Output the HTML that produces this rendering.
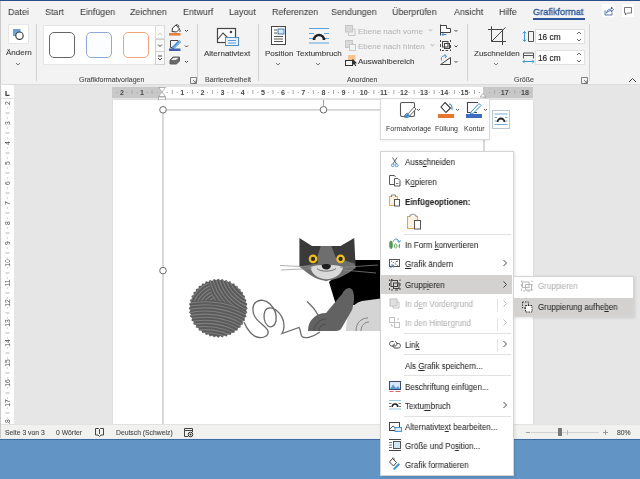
<!DOCTYPE html>
<html><head><meta charset="utf-8">
<style>
*{margin:0;padding:0;box-sizing:border-box}
html,body{width:640px;height:479px;overflow:hidden;background:#e6e6e6;font-family:"Liberation Sans",sans-serif;color:#333}
.a{position:absolute;white-space:nowrap}
body>div{will-change:transform}
.tab{position:absolute;top:6.5px;font-size:9.6px;color:#3c3c3c;line-height:10px;-webkit-text-stroke:0.05px #3c3c3c;transform:scaleX(0.93);transform-origin:0 0}
.rb{position:absolute;font-size:8px;color:#3a3a3a;line-height:9px;-webkit-text-stroke:0.1px #3a3a3a}
.gl{position:absolute;top:75.5px;font-size:7px;color:#4a4a4a;line-height:8px;-webkit-text-stroke:0.1px #4a4a4a}
.sep{position:absolute;top:24px;width:1px;height:57px;background:#d3d2d1}
.mi{position:absolute;left:405px;font-size:8.5px;color:#262626;line-height:9px;transform:scaleX(0.935);transform-origin:0 0;-webkit-text-stroke:0.05px #262626}
.mi.dis,.rb.dis{color:#b0b0b0;-webkit-text-stroke:0.05px #b0b0b0}
.ms{position:absolute;left:404px;width:107px;height:1px;background:#e2e2e2}
.chev{position:absolute;width:4px;height:4px;border-right:1px solid #555;border-bottom:1px solid #555;transform:rotate(45deg)}
</style></head><body>
<!-- ribbon background -->
<div class="a" style="left:0;top:0;width:640px;height:85px;background:#f3f3f3"></div>
<div class="a" style="left:0;top:0;width:640px;height:1px;background:#2b4f8a"></div>
<div class="a" style="left:0;top:1px;width:1px;height:84px;background:#c9c9c9"></div>
<div class="a" style="left:0;top:84px;width:640px;height:1px;background:#dcdcdc"></div>

<!-- tabs -->
<div class="tab" style="left:8px">Datei</div>
<div class="tab" style="left:45px">Start</div>
<div class="tab" style="left:80px">Einfügen</div>
<div class="tab" style="left:130px">Zeichnen</div>
<div class="tab" style="left:183px">Entwurf</div>
<div class="tab" style="left:229px">Layout</div>
<div class="tab" style="left:272px">Referenzen</div>
<div class="tab" style="left:331px">Sendungen</div>
<div class="tab" style="left:392px">Überprüfen</div>
<div class="tab" style="left:454px">Ansicht</div>
<div class="tab" style="left:499px">Hilfe</div>
<div class="tab" style="left:533px;color:#2b579a;font-size:9.9px;-webkit-text-stroke:0.35px #2b579a">Grafikformat</div>
<div class="a" style="left:533px;top:18px;width:52px;height:2px;background:#2b579a"></div>
<div class="a" style="left:602px;top:4px;width:13px;height:13px;background:#fff"></div>
<div class="a" style="left:622px;top:4px;width:12px;height:13px;background:#fff"></div>
<svg class="a" style="left:602px;top:4px" width="13" height="13" viewBox="0 0 13 13"><path d="M3 6.5 V11 H10 V8.5" fill="none" stroke="#2b579a" stroke-width="0.8"/><path d="M4.5 9 C5 6 7 5 9.5 5 V3 L11.5 5.5 L9.5 8 V6.5 C7.5 6.5 6 7.5 4.5 9 Z" fill="none" stroke="#2b579a" stroke-width="0.8"/></svg>
<svg class="a" style="left:622px;top:4px" width="12" height="13" viewBox="0 0 12 13"><path d="M2.5 3.5 H9.5 V9 H5.5 L3.5 11 V9 H2.5 Z" fill="none" stroke="#555" stroke-width="0.8"/></svg>


<!-- RIBBON GROUPS -->
<!-- group 1: Ändern -->
<div class="a" style="left:8px;top:24px;width:21px;height:20px;background:#fff;border:1px solid #e6e6e6"></div>
<svg class="a" style="left:8px;top:24px" width="21" height="20" viewBox="0 0 21 20">
<rect x="5" y="5" width="7.5" height="7" fill="#6a9fd8"/>
<circle cx="11.5" cy="11.7" r="3.7" fill="#fff" stroke="#333" stroke-width="1.1"/>
</svg>
<div class="rb" style="left:6px;top:48px">Ändern</div>
<svg class="a" style="left:14px;top:60.5px" width="8" height="6" viewBox="0 0 8 6"><path d="M2 2 L4 4 L6 2" fill="none" stroke="#666" stroke-width="0.9"/></svg>
<div class="sep" style="left:36px"></div>

<!-- group 2: Grafikformatvorlagen -->
<div class="a" style="left:43px;top:25px;width:113px;height:40px;background:#fff;border:1px solid #e6e6e6"></div>
<div class="a" style="left:49px;top:32px;width:26px;height:26px;border:1.5px solid #666;border-radius:5px"></div>
<div class="a" style="left:86px;top:32px;width:26px;height:26px;border:1.2px solid #8ea8da;border-radius:5px;background:#fbfdff"></div>
<div class="a" style="left:123px;top:32px;width:26px;height:26px;border:1.2px solid #f0a27a;border-radius:5px"></div>
<div class="a" style="left:155px;top:25px;width:10px;height:14px;background:#fafafa;border:1px solid #dcdcdc"></div>
<div class="a" style="left:155px;top:39px;width:10px;height:13px;background:#fafafa;border:1px solid #d0d0d0"></div>
<div class="a" style="left:155px;top:51px;width:10px;height:14px;background:#fafafa;border:1px solid #d0d0d0"></div>
<svg class="a" style="left:155px;top:25px" width="10" height="40" viewBox="0 0 10 40">
<path d="M3 10 L5 8 L7 10" fill="none" stroke="#c8c8c8" stroke-width="1"/>
<path d="M3 19.5 L5 21.5 L7 19.5" fill="none" stroke="#444" stroke-width="1"/>
<path d="M3 31 L7 31 M3 33 L5 35 L7 33" fill="none" stroke="#444" stroke-width="1"/>
</svg>
<svg class="a" style="left:167px;top:24px" width="26" height="42" viewBox="0 0 26 42">
<path d="M5.5 4 L9 1 L12.5 5 L9.5 8 L5 7.5 Z" fill="#fff" stroke="#333" stroke-width="1"/>
<path d="M9 1 C10 0 12 1 12 3 M12 5 C13.5 5.5 13.5 7.5 12.5 8" fill="none" stroke="#333" stroke-width="0.9"/>
<rect x="2" y="9" width="11.5" height="2.6" fill="#e8803c"/>
<path d="M18 6 L19.5 7.5 L21 6" fill="none" stroke="#444" stroke-width="1"/>
<path d="M11 16.5 H3.5 V23.5 H5" fill="none" stroke="#444" stroke-width="1"/>
<path d="M5.5 23 L12 16.5 L13.5 18 L7 24.5 L5 25 Z" fill="#fff" stroke="#2f79c8" stroke-width="1"/>
<path d="M6 23.5 L12 17.5" stroke="#3a8fd6" stroke-width="1.2"/>
<rect x="2" y="24.5" width="11.5" height="2.5" fill="#3f62ae"/>
<path d="M18 21.5 L19.5 23 L21 21.5" fill="none" stroke="#444" stroke-width="1"/>
<path d="M3 36 L6 33 H12.5 V37 L9.5 40 H3 Z" fill="#6a6a6a" stroke="#555" stroke-width="0.9"/>
<path d="M4 36 L6.5 33.8 H11.5 L9 36 Z" fill="#e8e8e8"/>
<path d="M18 37 L19.5 38.5 L21 37" fill="none" stroke="#444" stroke-width="1"/>
</svg>
<div class="gl" style="left:79px">Grafikformatvorlagen</div>
<svg class="a" style="left:190px;top:77px" width="7" height="7" viewBox="0 0 7 7"><path d="M0.5 0.5 H6.5 V6.5 H0.5Z M3 3 L6 6 M6 3.5 V6 H3.5" fill="none" stroke="#666" stroke-width="0.8"/></svg>
<div class="sep" style="left:197px"></div>

<!-- group 3: Barrierefreiheit -->
<svg class="a" style="left:216px;top:27px" width="24" height="20" viewBox="0 0 24 20">
<rect x="1.5" y="1.5" width="18" height="14" fill="#fff" stroke="#444" stroke-width="1.2"/>
<path d="M2 12 L7 6 L12 11" fill="none" stroke="#444" stroke-width="1.1"/>
<circle cx="15" cy="5" r="1.3" fill="#444"/>
<rect x="9.5" y="10.5" width="13" height="8" fill="#eaf3fb" stroke="#4a90d0" stroke-width="1"/>
<path d="M12 13.5 H20 M12 16 H20" stroke="#4a90d0" stroke-width="0.9"/>
</svg>
<div class="rb" style="left:204px;top:49px">Alternativtext</div>
<div class="gl" style="left:205px">Barrierefreiheit</div>
<div class="sep" style="left:258px"></div>

<!-- group 4: Anordnen -->
<svg class="a" style="left:270px;top:25px" width="18" height="21" viewBox="0 0 18 21">
<rect x="1.5" y="1.5" width="14" height="18" fill="#fff" stroke="#444" stroke-width="1"/>
<rect x="8" y="4" width="6" height="5" fill="#dbe9f6" stroke="#2f6fb5" stroke-width="0.9"/>
<path d="M4 5 H7 M4 8 H7 M4 11.5 H13 M4 14 H13 M4 16.5 H13" stroke="#444" stroke-width="0.9"/>
</svg>
<div class="rb" style="left:265px;top:49px">Position</div>
<svg class="a" style="left:274px;top:60.5px" width="8" height="6" viewBox="0 0 8 6"><path d="M2 2 L4 4 L6 2" fill="none" stroke="#666" stroke-width="0.9"/></svg>
<svg class="a" style="left:308px;top:27px" width="22" height="18" viewBox="0 0 22 18">
<path d="M1 1.5 H21 M1 6.5 H6 M16 6.5 H21 M1 11.5 H5 M17 11.5 H21 M1 16 H21" stroke="#62a3d8" stroke-width="1.2"/>
<path d="M6 13 A5 5 0 0 1 16 13" fill="none" stroke="#222" stroke-width="2.6"/>
</svg>
<div class="rb" style="left:296px;top:49px">Textumbruch</div>
<svg class="a" style="left:314px;top:60.5px" width="8" height="6" viewBox="0 0 8 6"><path d="M2 2 L4 4 L6 2" fill="none" stroke="#666" stroke-width="0.9"/></svg>

<svg class="a" style="left:344px;top:25px" width="14" height="42" viewBox="0 0 14 42">
<rect x="1.5" y="0.5" width="7" height="6.5" fill="#d9d9d9" stroke="#c6c6c6" stroke-width="1"/>
<path d="M8.5 4 H11 V10.5 H4.5 V7.5" fill="none" stroke="#c6c6c6" stroke-width="1"/>
<rect x="1.5" y="15.5" width="7" height="7" fill="#d9d9d9" stroke="#c6c6c6" stroke-width="1"/>
<rect x="5.5" y="19.5" width="6" height="6" fill="#f3f3f3" stroke="#c6c6c6" stroke-width="1"/>
<rect x="4" y="30" width="7.5" height="5" fill="#f7c38f"/>
<rect x="1.5" y="35.5" width="7" height="5" fill="none" stroke="#333" stroke-width="1"/>
<path d="M8.5 33.5 V40.5 L10 39 L11.3 41.3 L12.3 40.8 L11.1 38.5 L13 38.3 Z" fill="#333"/>
</svg>
<div class="rb dis" style="left:358px;top:27px;color:#b4b4b4">Ebene nach vorne</div>
<div class="chev" style="left:429px;top:28px;width:3px;height:3px;border-color:#c0c0c0"></div>
<div class="rb dis" style="left:358px;top:42px;color:#b4b4b4">Ebene nach hinten</div>
<div class="chev" style="left:431px;top:43px;width:3px;height:3px;border-color:#c0c0c0"></div>
<div class="rb" style="left:358px;top:57px">Auswahlbereich</div>

<svg class="a" style="left:439px;top:24px" width="22" height="42" viewBox="0 0 22 42">
<path d="M1.5 0.5 V11.5" stroke="#444" stroke-width="1"/>
<path d="M2 1.5 H7.5 V4.5 H11.5 V8.5 H2" fill="#fff" stroke="#444" stroke-width="1"/>
<path d="M7.5 10.5 H3 M4.5 9 L3 10.5 L4.5 12" fill="none" stroke="#3a8fd6" stroke-width="1"/>
<path d="M15.5 6 L17 7.5 L18.5 6" fill="none" stroke="#444" stroke-width="1"/>
<path d="M1.5 16 V18 M1.5 20 V23 M1.5 25 V27 M11.5 16 V18 M11.5 21 V24 M11.5 25.5 V27 M3 26.5 H5 M6.5 26.5 H9" fill="none" stroke="#444" stroke-width="1"/>
<rect x="3.5" y="17.5" width="5.5" height="5.5" fill="none" stroke="#444" stroke-width="1"/>
<rect x="5.5" y="19.5" width="5" height="5" fill="none" stroke="#444" stroke-width="1"/>
<path d="M15.5 21.5 L17 23 L18.5 21.5" fill="none" stroke="#444" stroke-width="1"/>
<path d="M1.5 40.5 L11.5 33.5 V40.5 Z" fill="none" stroke="#444" stroke-width="1"/>
<path d="M2.5 36.5 C1.5 33 4 31 7 32 M5.5 30.5 L7.5 32 L6 34" fill="none" stroke="#3a8fd6" stroke-width="1"/>
<path d="M15.5 37 L17 38.5 L18.5 37" fill="none" stroke="#444" stroke-width="1"/>
</svg>
<div class="gl" style="left:347px">Anordnen</div>
<div class="sep" style="left:467px"></div>

<!-- group 5: Größe -->
<svg class="a" style="left:484px;top:22px" width="24" height="25" viewBox="0 0 24 25">
<path d="M4 7.5 H18.5 V23 M7.5 4.3 V19.5 H22 M7.5 19.5 L21.6 5.3" fill="none" stroke="#444" stroke-width="1"/>
</svg>
<div class="rb" style="left:474px;top:49px">Zuschneiden</div>
<svg class="a" style="left:492px;top:60.5px" width="8" height="6" viewBox="0 0 8 6"><path d="M2 2 L4 4 L6 2" fill="none" stroke="#666" stroke-width="0.9"/></svg>
<svg class="a" style="left:521px;top:30px" width="14" height="35" viewBox="0 0 14 35">
<path d="M3.5 1.5 V11.5 M1.8 3.3 L3.5 1.5 L5.2 3.3 M1.8 9.7 L3.5 11.5 L5.2 9.7" fill="none" stroke="#3a9ad0" stroke-width="1"/>
<path d="M7.5 1.5 H12.5 V11.5 H7.5 Z" fill="none" stroke="#555" stroke-width="1"/>
<path d="M2.5 28.5 V23 H12.5 V28.5 M2.5 25.5 H12.5" fill="none" stroke="#555" stroke-width="1"/>
<path d="M2 31.5 H13 M3.7 29.8 L2 31.5 L3.7 33.2 M11.3 29.8 L13 31.5 L11.3 33.2" fill="none" stroke="#3a9ad0" stroke-width="1"/>
</svg>
<div class="a" style="left:535px;top:29px;width:50px;height:15px;background:#fff;border:1px solid #e0e0e0"></div>
<div class="rb" style="left:538px;top:33px;font-size:8.3px;color:#222;-webkit-text-stroke:0.15px #222">16 cm</div>
<div class="a" style="left:535px;top:50px;width:50px;height:15px;background:#fff;border:1px solid #e0e0e0"></div>
<div class="rb" style="left:538px;top:54px;font-size:8.3px;color:#222;-webkit-text-stroke:0.15px #222">16 cm</div>
<svg class="a" style="left:576px;top:30px" width="6" height="35" viewBox="0 0 6 35">
<path d="M1 4 L3 2 L5 4 M1 9 L3 11 L5 9 M1 25 L3 23 L5 25 M1 30 L3 32 L5 30" fill="none" stroke="#555" stroke-width="0.9"/>
</svg>
<div class="gl" style="left:514px">Größe</div>
<svg class="a" style="left:581px;top:77px" width="7" height="7" viewBox="0 0 7 7"><path d="M0.5 0.5 H6.5 V6.5 H0.5Z M3 3 L6 6 M6 3.5 V6 H3.5" fill="none" stroke="#666" stroke-width="0.8"/></svg>
<div class="sep" style="left:589px"></div>
<svg class="a" style="left:628px;top:77px" width="9" height="6" viewBox="0 0 9 6"><path d="M1 5 L4.5 1.5 L8 5" fill="none" stroke="#444" stroke-width="1"/></svg>

<!-- body area -->
<div class="a" style="left:112px;top:87px;width:421px;height:11px;background:#fff"></div>
<div class="a" style="left:112px;top:87px;width:49px;height:11px;background:#c8c8c8"></div>
<div class="a" style="left:483px;top:87px;width:50px;height:11px;background:#c8c8c8"></div>
<svg class="a" style="left:0;top:0" width="640" height="110" viewBox="0 0 640 110">
<rect x="116.4" y="92" width="1" height="1" fill="#a0a0a0"/>
<text x="121.9" y="95" font-size="7.2" font-weight="bold" text-anchor="middle" fill="#4a4a4a" font-family="Liberation Sans">2</text>
<rect x="126.4" y="92" width="1" height="1" fill="#a0a0a0"/>
<rect x="131.5" y="90" width="1" height="4" fill="#a8a8a8"/>
<rect x="136.5" y="92" width="1" height="1" fill="#a0a0a0"/>
<text x="142.0" y="95" font-size="7.2" font-weight="bold" text-anchor="middle" fill="#4a4a4a" font-family="Liberation Sans">1</text>
<rect x="146.6" y="92" width="1" height="1" fill="#a0a0a0"/>
<rect x="151.6" y="90" width="1" height="4" fill="#a8a8a8"/>
<rect x="156.7" y="92" width="1" height="1" fill="#a0a0a0"/>
<rect x="166.7" y="92" width="1" height="1" fill="#a0a0a0"/>
<rect x="171.8" y="90" width="1" height="4" fill="#a8a8a8"/>
<rect x="176.8" y="92" width="1" height="1" fill="#a0a0a0"/>
<text x="182.3" y="95" font-size="7.2" font-weight="bold" text-anchor="middle" fill="#4a4a4a" font-family="Liberation Sans">1</text>
<rect x="186.9" y="92" width="1" height="1" fill="#a0a0a0"/>
<rect x="191.9" y="90" width="1" height="4" fill="#a8a8a8"/>
<rect x="197.0" y="92" width="1" height="1" fill="#a0a0a0"/>
<text x="202.5" y="95" font-size="7.2" font-weight="bold" text-anchor="middle" fill="#4a4a4a" font-family="Liberation Sans">2</text>
<rect x="207.0" y="92" width="1" height="1" fill="#a0a0a0"/>
<rect x="212.1" y="90" width="1" height="4" fill="#a8a8a8"/>
<rect x="217.1" y="92" width="1" height="1" fill="#a0a0a0"/>
<text x="222.6" y="95" font-size="7.2" font-weight="bold" text-anchor="middle" fill="#4a4a4a" font-family="Liberation Sans">3</text>
<rect x="227.2" y="92" width="1" height="1" fill="#a0a0a0"/>
<rect x="232.2" y="90" width="1" height="4" fill="#a8a8a8"/>
<rect x="237.3" y="92" width="1" height="1" fill="#a0a0a0"/>
<text x="242.8" y="95" font-size="7.2" font-weight="bold" text-anchor="middle" fill="#4a4a4a" font-family="Liberation Sans">4</text>
<rect x="247.3" y="92" width="1" height="1" fill="#a0a0a0"/>
<rect x="252.4" y="90" width="1" height="4" fill="#a8a8a8"/>
<rect x="257.4" y="92" width="1" height="1" fill="#a0a0a0"/>
<text x="262.9" y="95" font-size="7.2" font-weight="bold" text-anchor="middle" fill="#4a4a4a" font-family="Liberation Sans">5</text>
<rect x="267.5" y="92" width="1" height="1" fill="#a0a0a0"/>
<rect x="272.5" y="90" width="1" height="4" fill="#a8a8a8"/>
<rect x="277.6" y="92" width="1" height="1" fill="#a0a0a0"/>
<text x="283.1" y="95" font-size="7.2" font-weight="bold" text-anchor="middle" fill="#4a4a4a" font-family="Liberation Sans">6</text>
<rect x="287.6" y="92" width="1" height="1" fill="#a0a0a0"/>
<rect x="292.7" y="90" width="1" height="4" fill="#a8a8a8"/>
<rect x="297.7" y="92" width="1" height="1" fill="#a0a0a0"/>
<text x="303.2" y="95" font-size="7.2" font-weight="bold" text-anchor="middle" fill="#4a4a4a" font-family="Liberation Sans">7</text>
<rect x="307.8" y="92" width="1" height="1" fill="#a0a0a0"/>
<rect x="312.8" y="90" width="1" height="4" fill="#a8a8a8"/>
<rect x="317.9" y="92" width="1" height="1" fill="#a0a0a0"/>
<text x="323.4" y="95" font-size="7.2" font-weight="bold" text-anchor="middle" fill="#4a4a4a" font-family="Liberation Sans">8</text>
<rect x="327.9" y="92" width="1" height="1" fill="#a0a0a0"/>
<rect x="333.0" y="90" width="1" height="4" fill="#a8a8a8"/>
<rect x="338.0" y="92" width="1" height="1" fill="#a0a0a0"/>
<text x="343.5" y="95" font-size="7.2" font-weight="bold" text-anchor="middle" fill="#4a4a4a" font-family="Liberation Sans">9</text>
<rect x="348.1" y="92" width="1" height="1" fill="#a0a0a0"/>
<rect x="353.1" y="90" width="1" height="4" fill="#a8a8a8"/>
<rect x="358.2" y="92" width="1" height="1" fill="#a0a0a0"/>
<text x="363.7" y="95" font-size="7.2" font-weight="bold" text-anchor="middle" fill="#4a4a4a" font-family="Liberation Sans">10</text>
<rect x="368.2" y="92" width="1" height="1" fill="#a0a0a0"/>
<rect x="373.3" y="90" width="1" height="4" fill="#a8a8a8"/>
<rect x="378.3" y="92" width="1" height="1" fill="#a0a0a0"/>
<text x="383.8" y="95" font-size="7.2" font-weight="bold" text-anchor="middle" fill="#4a4a4a" font-family="Liberation Sans">11</text>
<rect x="388.4" y="92" width="1" height="1" fill="#a0a0a0"/>
<rect x="393.4" y="90" width="1" height="4" fill="#a8a8a8"/>
<rect x="398.5" y="92" width="1" height="1" fill="#a0a0a0"/>
<text x="404.0" y="95" font-size="7.2" font-weight="bold" text-anchor="middle" fill="#4a4a4a" font-family="Liberation Sans">12</text>
<rect x="408.5" y="92" width="1" height="1" fill="#a0a0a0"/>
<rect x="413.6" y="90" width="1" height="4" fill="#a8a8a8"/>
<rect x="418.6" y="92" width="1" height="1" fill="#a0a0a0"/>
<text x="424.1" y="95" font-size="7.2" font-weight="bold" text-anchor="middle" fill="#4a4a4a" font-family="Liberation Sans">13</text>
<rect x="428.7" y="92" width="1" height="1" fill="#a0a0a0"/>
<rect x="433.7" y="90" width="1" height="4" fill="#a8a8a8"/>
<rect x="438.8" y="92" width="1" height="1" fill="#a0a0a0"/>
<text x="444.3" y="95" font-size="7.2" font-weight="bold" text-anchor="middle" fill="#4a4a4a" font-family="Liberation Sans">14</text>
<rect x="448.8" y="92" width="1" height="1" fill="#a0a0a0"/>
<rect x="453.9" y="90" width="1" height="4" fill="#a8a8a8"/>
<rect x="458.9" y="92" width="1" height="1" fill="#a0a0a0"/>
<text x="464.4" y="95" font-size="7.2" font-weight="bold" text-anchor="middle" fill="#4a4a4a" font-family="Liberation Sans">15</text>
<rect x="469.0" y="92" width="1" height="1" fill="#a0a0a0"/>
<rect x="474.0" y="90" width="1" height="4" fill="#a8a8a8"/>
<rect x="479.1" y="92" width="1" height="1" fill="#a0a0a0"/>
<rect x="489.1" y="92" width="1" height="1" fill="#a0a0a0"/>
<rect x="494.2" y="90" width="1" height="4" fill="#a8a8a8"/>
<rect x="499.2" y="92" width="1" height="1" fill="#a0a0a0"/>
<text x="504.7" y="95" font-size="7.2" font-weight="bold" text-anchor="middle" fill="#4a4a4a" font-family="Liberation Sans">17</text>
<rect x="509.3" y="92" width="1" height="1" fill="#a0a0a0"/>
<rect x="514.3" y="90" width="1" height="4" fill="#a8a8a8"/>
<rect x="519.4" y="92" width="1" height="1" fill="#a0a0a0"/>
<text x="524.9" y="95" font-size="7.2" font-weight="bold" text-anchor="middle" fill="#4a4a4a" font-family="Liberation Sans">18</text>
<rect x="529.4" y="92" width="1" height="1" fill="#a0a0a0"/>
<path d="M158.5 87.5 L165.5 87.5 L162 92 Z M162 92 L158.5 96.5 L165.5 96.5 Z" fill="#fff" stroke="#a0a0a0" stroke-width="0.8"/>
<rect x="158.5" y="97" width="7" height="3" fill="#fff" stroke="#a0a0a0" stroke-width="0.8"/>
<path d="M480 97 L483 93.5 L486 97 Z" fill="#fff" stroke="#a0a0a0" stroke-width="0.8"/>
</svg>
<div class="a" style="left:1px;top:85px;width:13px;height:339px;background:#fff"></div>
<div class="a" style="left:1px;top:98px;width:13px;height:1px;background:#e0e0e0"></div>
<svg class="a" style="left:0;top:0" width="16" height="424" viewBox="0 0 16 424">
<path d="M6 91 V95.3 H9.5" fill="none" stroke="#444" stroke-width="1.3"/>
<text x="0" y="0" transform="translate(10.2,103) rotate(-90)" font-size="6.8" text-anchor="middle" fill="#505050" font-family="Liberation Sans">2</text>
<rect x="7" y="107.5" width="1" height="1" fill="#b4b4b4"/>
<rect x="5.5" y="112.5" width="4" height="1" fill="#b8b8b8"/>
<rect x="7" y="117.5" width="1" height="1" fill="#b4b4b4"/>
<text x="0" y="0" transform="translate(10.2,123) rotate(-90)" font-size="6.8" text-anchor="middle" fill="#505050" font-family="Liberation Sans">3</text>
<rect x="7" y="127.5" width="1" height="1" fill="#b4b4b4"/>
<rect x="5.5" y="132.5" width="4" height="1" fill="#b8b8b8"/>
<rect x="7" y="137.5" width="1" height="1" fill="#b4b4b4"/>
<text x="0" y="0" transform="translate(10.2,143) rotate(-90)" font-size="6.8" text-anchor="middle" fill="#505050" font-family="Liberation Sans">4</text>
<rect x="7" y="147.5" width="1" height="1" fill="#b4b4b4"/>
<rect x="5.5" y="152.5" width="4" height="1" fill="#b8b8b8"/>
<rect x="7" y="157.5" width="1" height="1" fill="#b4b4b4"/>
<text x="0" y="0" transform="translate(10.2,163) rotate(-90)" font-size="6.8" text-anchor="middle" fill="#505050" font-family="Liberation Sans">5</text>
<rect x="7" y="167.5" width="1" height="1" fill="#b4b4b4"/>
<rect x="5.5" y="172.5" width="4" height="1" fill="#b8b8b8"/>
<rect x="7" y="177.5" width="1" height="1" fill="#b4b4b4"/>
<text x="0" y="0" transform="translate(10.2,183) rotate(-90)" font-size="6.8" text-anchor="middle" fill="#505050" font-family="Liberation Sans">6</text>
<rect x="7" y="187.5" width="1" height="1" fill="#b4b4b4"/>
<rect x="5.5" y="192.5" width="4" height="1" fill="#b8b8b8"/>
<rect x="7" y="197.5" width="1" height="1" fill="#b4b4b4"/>
<text x="0" y="0" transform="translate(10.2,203) rotate(-90)" font-size="6.8" text-anchor="middle" fill="#505050" font-family="Liberation Sans">7</text>
<rect x="7" y="207.5" width="1" height="1" fill="#b4b4b4"/>
<rect x="5.5" y="212.5" width="4" height="1" fill="#b8b8b8"/>
<rect x="7" y="217.5" width="1" height="1" fill="#b4b4b4"/>
<text x="0" y="0" transform="translate(10.2,223) rotate(-90)" font-size="6.8" text-anchor="middle" fill="#505050" font-family="Liberation Sans">8</text>
<rect x="7" y="227.5" width="1" height="1" fill="#b4b4b4"/>
<rect x="5.5" y="232.5" width="4" height="1" fill="#b8b8b8"/>
<rect x="7" y="237.5" width="1" height="1" fill="#b4b4b4"/>
<text x="0" y="0" transform="translate(10.2,243) rotate(-90)" font-size="6.8" text-anchor="middle" fill="#505050" font-family="Liberation Sans">9</text>
<rect x="7" y="247.5" width="1" height="1" fill="#b4b4b4"/>
<rect x="5.5" y="252.5" width="4" height="1" fill="#b8b8b8"/>
<rect x="7" y="257.5" width="1" height="1" fill="#b4b4b4"/>
<text x="0" y="0" transform="translate(10.2,263) rotate(-90)" font-size="6.8" text-anchor="middle" fill="#505050" font-family="Liberation Sans">10</text>
<rect x="7" y="267.5" width="1" height="1" fill="#b4b4b4"/>
<rect x="5.5" y="272.5" width="4" height="1" fill="#b8b8b8"/>
<rect x="7" y="277.5" width="1" height="1" fill="#b4b4b4"/>
<text x="0" y="0" transform="translate(10.2,283) rotate(-90)" font-size="6.8" text-anchor="middle" fill="#505050" font-family="Liberation Sans">11</text>
<rect x="7" y="287.5" width="1" height="1" fill="#b4b4b4"/>
<rect x="5.5" y="292.5" width="4" height="1" fill="#b8b8b8"/>
<rect x="7" y="297.5" width="1" height="1" fill="#b4b4b4"/>
<text x="0" y="0" transform="translate(10.2,303) rotate(-90)" font-size="6.8" text-anchor="middle" fill="#505050" font-family="Liberation Sans">12</text>
<rect x="7" y="307.5" width="1" height="1" fill="#b4b4b4"/>
<rect x="5.5" y="312.5" width="4" height="1" fill="#b8b8b8"/>
<rect x="7" y="317.5" width="1" height="1" fill="#b4b4b4"/>
<text x="0" y="0" transform="translate(10.2,323) rotate(-90)" font-size="6.8" text-anchor="middle" fill="#505050" font-family="Liberation Sans">13</text>
<rect x="7" y="327.5" width="1" height="1" fill="#b4b4b4"/>
<rect x="5.5" y="332.5" width="4" height="1" fill="#b8b8b8"/>
<rect x="7" y="337.5" width="1" height="1" fill="#b4b4b4"/>
<text x="0" y="0" transform="translate(10.2,343) rotate(-90)" font-size="6.8" text-anchor="middle" fill="#505050" font-family="Liberation Sans">14</text>
<rect x="7" y="347.5" width="1" height="1" fill="#b4b4b4"/>
<rect x="5.5" y="352.5" width="4" height="1" fill="#b8b8b8"/>
<rect x="7" y="357.5" width="1" height="1" fill="#b4b4b4"/>
<text x="0" y="0" transform="translate(10.2,363) rotate(-90)" font-size="6.8" text-anchor="middle" fill="#505050" font-family="Liberation Sans">15</text>
<rect x="7" y="367.5" width="1" height="1" fill="#b4b4b4"/>
<rect x="5.5" y="372.5" width="4" height="1" fill="#b8b8b8"/>
<rect x="7" y="377.5" width="1" height="1" fill="#b4b4b4"/>
<text x="0" y="0" transform="translate(10.2,383) rotate(-90)" font-size="6.8" text-anchor="middle" fill="#505050" font-family="Liberation Sans">16</text>
<rect x="7" y="387.5" width="1" height="1" fill="#b4b4b4"/>
<rect x="5.5" y="392.5" width="4" height="1" fill="#b8b8b8"/>
<rect x="7" y="397.5" width="1" height="1" fill="#b4b4b4"/>
<text x="0" y="0" transform="translate(10.2,403) rotate(-90)" font-size="6.8" text-anchor="middle" fill="#505050" font-family="Liberation Sans">17</text>
<rect x="7" y="407.5" width="1" height="1" fill="#b4b4b4"/>
<rect x="5.5" y="412.5" width="4" height="1" fill="#b8b8b8"/>
<rect x="7" y="417.5" width="1" height="1" fill="#b4b4b4"/>
<text x="0" y="0" transform="translate(10.2,423) rotate(-90)" font-size="6.8" text-anchor="middle" fill="#505050" font-family="Liberation Sans">18</text>
</svg>
<div id="page" class="a" style="left:113px;top:100px;width:420px;height:324px;background:#fff;box-shadow:0 0 2px rgba(0,0,0,0.10)"></div>


<!-- status bar -->
<div class="a" style="left:0;top:424px;width:640px;height:14px;background:#f1f1f0;border-top:1px solid #e2e2e2"></div><div class="a" style="left:0;top:438px;width:640px;height:1px;background:#e4f1fa"></div>
<div class="a" style="left:0;top:439px;width:640px;height:40px;background:#6295c6;border-top:1px solid #406b98"></div>
<div class="a" style="left:5px;top:429px;font-size:6.8px;color:#4a4a4a;line-height:8px;-webkit-text-stroke:0.1px #4a4a4a">Seite 3 von 3</div>
<div class="a" style="left:56px;top:429px;font-size:6.8px;color:#4a4a4a;line-height:8px;-webkit-text-stroke:0.1px #4a4a4a">0 Wörter</div>
<svg class="a" style="left:94px;top:427px" width="11" height="11" viewBox="0 0 11 11"><path d="M1.5 1.5 H4.5 L5.5 2.5 L6.5 1.5 H9.5 V8 H7 L5.5 9.5 L4 8 H1.5 Z M5.5 2.5 V7" fill="none" stroke="#444" stroke-width="1"/></svg>
<div class="a" style="left:116px;top:429px;font-size:6.8px;color:#4a4a4a;line-height:8px;-webkit-text-stroke:0.1px #4a4a4a">Deutsch (Schweiz)</div>
<svg class="a" style="left:183px;top:427px" width="11" height="11" viewBox="0 0 11 11"><path d="M1.5 9.5 V1.5 H9.5 V5 M1.5 3.5 H9.5 M1.5 9.5 H5" fill="none" stroke="#444" stroke-width="1"/><circle cx="7.5" cy="7.5" r="2.3" fill="none" stroke="#333" stroke-width="1"/><circle cx="7.5" cy="7.5" r="1" fill="#333"/></svg>
<div class="a" style="left:526px;top:431.5px;width:4px;height:1px;background:#a0a0a0"></div>
<div class="a" style="left:531px;top:431.5px;width:68px;height:1px;background:#d2d2d2"></div>
<div class="a" style="left:567px;top:429.5px;width:1px;height:5px;background:#bbb"></div>
<div class="a" style="left:558px;top:428px;width:4px;height:8px;background:#777"></div>
<div class="a" style="left:603px;top:431.5px;width:5px;height:1px;background:#999"></div>
<div class="a" style="left:605px;top:429.5px;width:1px;height:5px;background:#999"></div>
<div class="a" style="left:616.5px;top:429px;font-size:6.8px;color:#4a4a4a;line-height:8px;-webkit-text-stroke:0.1px #4a4a4a">80%</div>



<div class="a" style="left:0;top:85px;width:1px;height:353px;background:#c9c9c9"></div>
<!-- illustration -->
<svg class="a" style="left:0;top:0" width="640" height="424" viewBox="0 0 640 424">
<defs>
<clipPath id="ball"><circle cx="218.4" cy="308.4" r="29"/></clipPath>
</defs>
<!-- frame -->
<path d="M163 109.8 H484 V140 M163 109.8 V424" fill="none" stroke="#c4c4c4" stroke-width="1.3"/>
<path d="M484 140 V151" fill="none" stroke="#c4c4c4" stroke-width="1.3"/>
<circle cx="163" cy="109.8" r="3.3" fill="#fff" stroke="#6a6a6a" stroke-width="1"/>
<circle cx="323.5" cy="109.8" r="3.3" fill="#fff" stroke="#6a6a6a" stroke-width="1"/>
<path d="M323.5 106.5 V100" stroke="#9a9a9a" stroke-width="1"/>
<circle cx="163" cy="270.6" r="3.3" fill="#fff" stroke="#6a6a6a" stroke-width="1"/>
<!-- yarn ball -->
<clipPath id="ballc"><polygon points="247.70,308.20 246.03,310.19 247.40,312.40 245.46,314.13 246.51,316.51 244.34,317.95 245.03,320.45 242.69,321.57 243.02,324.15 240.54,324.92 240.49,327.52 237.93,327.93 237.52,330.49 234.92,330.54 234.15,333.02 231.57,332.69 230.45,335.03 227.95,334.34 226.51,336.51 224.13,335.46 222.40,337.40 220.19,336.03 218.20,337.70 216.21,336.03 214.00,337.40 212.27,335.46 209.89,336.51 208.45,334.34 205.95,335.03 204.83,332.69 202.25,333.02 201.48,330.54 198.88,330.49 198.47,327.93 195.91,327.52 195.86,324.92 193.38,324.15 193.71,321.57 191.37,320.45 192.06,317.95 189.89,316.51 190.94,314.13 189.00,312.40 190.37,310.19 188.70,308.20 190.37,306.21 189.00,304.00 190.94,302.27 189.89,299.89 192.06,298.45 191.37,295.95 193.71,294.83 193.38,292.25 195.86,291.48 195.91,288.88 198.47,288.47 198.88,285.91 201.48,285.86 202.25,283.38 204.83,283.71 205.95,281.37 208.45,282.06 209.89,279.89 212.27,280.94 214.00,279.00 216.21,280.37 218.20,278.70 220.19,280.37 222.40,279.00 224.13,280.94 226.51,279.89 227.95,282.06 230.45,281.37 231.57,283.71 234.15,283.38 234.92,285.86 237.52,285.91 237.93,288.47 240.49,288.88 240.54,291.48 243.02,292.25 242.69,294.83 245.03,295.95 244.34,298.45 246.51,299.89 245.46,302.27 247.40,304.00 246.03,306.21"/></clipPath>
<clipPath id="bLow"><path d="M180 302 C200 299 213 299 224 302 C235 305 243 310 250 318 L256 318 L256 345 L180 345 Z"/></clipPath>
<clipPath id="bLeft"><path d="M180 302 L213.5 299.8 L206 272 L180 272 Z"/></clipPath>
<clipPath id="bRight"><path d="M213.5 299.8 L206 272 L256 272 L256 318 L250 318 C243 310 235 305 224 302 Z"/></clipPath>
<polygon points="247.70,308.20 246.03,310.19 247.40,312.40 245.46,314.13 246.51,316.51 244.34,317.95 245.03,320.45 242.69,321.57 243.02,324.15 240.54,324.92 240.49,327.52 237.93,327.93 237.52,330.49 234.92,330.54 234.15,333.02 231.57,332.69 230.45,335.03 227.95,334.34 226.51,336.51 224.13,335.46 222.40,337.40 220.19,336.03 218.20,337.70 216.21,336.03 214.00,337.40 212.27,335.46 209.89,336.51 208.45,334.34 205.95,335.03 204.83,332.69 202.25,333.02 201.48,330.54 198.88,330.49 198.47,327.93 195.91,327.52 195.86,324.92 193.38,324.15 193.71,321.57 191.37,320.45 192.06,317.95 189.89,316.51 190.94,314.13 189.00,312.40 190.37,310.19 188.70,308.20 190.37,306.21 189.00,304.00 190.94,302.27 189.89,299.89 192.06,298.45 191.37,295.95 193.71,294.83 193.38,292.25 195.86,291.48 195.91,288.88 198.47,288.47 198.88,285.91 201.48,285.86 202.25,283.38 204.83,283.71 205.95,281.37 208.45,282.06 209.89,279.89 212.27,280.94 214.00,279.00 216.21,280.37 218.20,278.70 220.19,280.37 222.40,279.00 224.13,280.94 226.51,279.89 227.95,282.06 230.45,281.37 231.57,283.71 234.15,283.38 234.92,285.86 237.52,285.91 237.93,288.47 240.49,288.88 240.54,291.48 243.02,292.25 242.69,294.83 245.03,295.95 244.34,298.45 246.51,299.89 245.46,302.27 247.40,304.00 246.03,306.21" fill="#5a5a5a"/>
<g clip-path="url(#ballc)" fill="none" stroke="#808080" stroke-width="1.1">
<g clip-path="url(#bLow)">
<circle cx="205" cy="390" r="48.0"/>
<circle cx="205" cy="390" r="51.1"/>
<circle cx="205" cy="390" r="54.2"/>
<circle cx="205" cy="390" r="57.3"/>
<circle cx="205" cy="390" r="60.4"/>
<circle cx="205" cy="390" r="63.5"/>
<circle cx="205" cy="390" r="66.6"/>
<circle cx="205" cy="390" r="69.7"/>
<circle cx="205" cy="390" r="72.8"/>
<circle cx="205" cy="390" r="75.9"/>
<circle cx="205" cy="390" r="79.0"/>
<circle cx="205" cy="390" r="82.1"/>
<circle cx="205" cy="390" r="85.2"/>
<circle cx="205" cy="390" r="88.3"/>
<circle cx="205" cy="390" r="91.4"/>
<circle cx="205" cy="390" r="94.5"/>
</g><g clip-path="url(#bLeft)">
<circle cx="222" cy="314" r="12.0"/>
<circle cx="222" cy="314" r="15.1"/>
<circle cx="222" cy="314" r="18.2"/>
<circle cx="222" cy="314" r="21.3"/>
<circle cx="222" cy="314" r="24.4"/>
<circle cx="222" cy="314" r="27.5"/>
<circle cx="222" cy="314" r="30.6"/>
<circle cx="222" cy="314" r="33.7"/>
<circle cx="222" cy="314" r="36.8"/>
<circle cx="222" cy="314" r="39.9"/>
<circle cx="222" cy="314" r="43.0"/>
<circle cx="222" cy="314" r="46.1"/>
<circle cx="222" cy="314" r="49.2"/>
</g><g clip-path="url(#bRight)">
<circle cx="262" cy="268" r="10.0"/>
<circle cx="262" cy="268" r="13.1"/>
<circle cx="262" cy="268" r="16.2"/>
<circle cx="262" cy="268" r="19.3"/>
<circle cx="262" cy="268" r="22.4"/>
<circle cx="262" cy="268" r="25.5"/>
<circle cx="262" cy="268" r="28.6"/>
<circle cx="262" cy="268" r="31.7"/>
<circle cx="262" cy="268" r="34.8"/>
<circle cx="262" cy="268" r="37.9"/>
<circle cx="262" cy="268" r="41.0"/>
<circle cx="262" cy="268" r="44.1"/>
<circle cx="262" cy="268" r="47.2"/>
<circle cx="262" cy="268" r="50.3"/>
<circle cx="262" cy="268" r="53.4"/>
<circle cx="262" cy="268" r="56.5"/>
<circle cx="262" cy="268" r="59.6"/>
<circle cx="262" cy="268" r="62.7"/>
<circle cx="262" cy="268" r="65.8"/>
<circle cx="262" cy="268" r="68.9"/>
<circle cx="262" cy="268" r="72.0"/>
</g></g>
<!-- string -->
<path d="M244 322 C247 330 253 337 259 337.5 C265 338 269 335 268 331 C267 327 258 322 255 317 C252 312 252 305 256 302 C260 299 266 300 270 304 C275 309 277 315 276 321 C275 326 271 328 268 326 C264 323 263 316 265 311 C267 307 272 307 276 310 C281 314 284 320 284 326 C284 329 283 332 282 333.5 L299 327.5 C301 330 300 334 302 336.5 C305 339 313 337 320 332" fill="none" stroke="#6a6a6a" stroke-width="1.3"/>
<path d="M307 301.5 C312 306 316 311 318 315" fill="none" stroke="#6a6a6a" stroke-width="1.3"/>
<!-- cat body black -->
<path d="M329 282 L354 260 L392 260 L392 297 L355 305 L336 305 Z" fill="#000"/>
<!-- hind light grey -->
<path d="M346 331 C346 314 352 303 362 301 L392 297 L392 331 Z" fill="#d4d4d4"/>
<path d="M356 331 C356 322 362 318 368 318 M361 331 C361 325 365 322 369 322" fill="none" stroke="#7a7a7a" stroke-width="0.9"/>
<!-- leg + paw -->
<path d="M308 331 C308 320 316 313 326 313 L342 294 C345 287 351 286 353 291 C355 297 354 304 352 310 L341 329 C340 330 338 331 336 331 Z" fill="#626262"/>
<path d="M314 331 C314 324 320 319 326 319 M319 331 C319 327 322 324 326 324" fill="none" stroke="#4a4a4a" stroke-width="0.9"/>
<!-- head -->
<path d="M299.4 238 L312 246 L340.6 246 L354.2 238 L355.7 268.1 L326 281 L299.4 266.5 Z" fill="#3a3a3a"/>
<path d="M320.7 246 L331.4 246 L336 258 L354.5 263.6 L355.7 268.1 C346 275 336 280.7 326 280.7 C316 280.7 306 272 299.4 266.5 L318 263.3 L317 258 Z" fill="#6e6e6e"/>
<path d="M310.5 267 C318 264 335 264 343 267 C342.5 274 334 279.2 326.5 279.2 C318.5 279.2 311 274 310.5 267 Z" fill="#d9d9d9"/>
<path d="M317 268.5 C320 272 332 272 336 268.5" fill="none" stroke="#555" stroke-width="0.8"/>
<path d="M321.7 265.5 C322 263.5 330.5 263.5 330.9 265.5 C330.9 268 328.5 269.6 326.3 269.6 C324 269.6 321.7 268 321.7 265.5 Z" fill="#1e1e1e"/>
<circle cx="313" cy="258.9" r="3.2" fill="#2a2a2a" stroke="#f2bd1c" stroke-width="2.2"/>
<circle cx="340.6" cy="258.9" r="3.2" fill="#2a2a2a" stroke="#f2bd1c" stroke-width="2.2"/>
<path d="M280 265.5 L312 267 M281 270 L312 268.5 M340 267.5 L378 265 M343 270 L376 273" fill="none" stroke="#909090" stroke-width="0.7"/>
</svg>


<!-- floating toolbar -->
<div class="a" style="left:380px;top:98px;width:110px;height:42px;background:#fff;border:1px solid #dadada;box-shadow:0 1px 2px rgba(0,0,0,0.08)"></div>
<svg class="a" style="left:398px;top:101px" width="92" height="19" viewBox="0 0 92 19">
<rect x="2.5" y="1.5" width="14" height="14" rx="1.5" fill="#fff" stroke="#555" stroke-width="1.1"/>
<path d="M6 16 C7 13 9 12 10.5 12.5 L16 6 L18 8 L12.5 14 C12 16 9 17 6 16 Z" fill="#fff" stroke="#555" stroke-width="0.9"/>
<path d="M6 16 C7 13.5 9 12.5 10.5 13 L12 14.5 C11 16 9 17 6 16 Z" fill="#3a8fd6"/>
<path d="M19 8 L20.5 9.5 L22 8" fill="none" stroke="#555" stroke-width="1"/>
<path d="M43 6 L47 1.5 L52.5 7 L48 11.5 Z" fill="#fff" stroke="#333" stroke-width="1.1"/>
<path d="M51 3 Q54 3 54 7 L54 9" fill="none" stroke="#3a8fd6" stroke-width="1.1"/>
<rect x="40" y="13" width="16" height="4" fill="#e8772e"/>
<path d="M58 8 L59.5 9.5 L61 8" fill="none" stroke="#555" stroke-width="1"/>
<path d="M79 11.5 H69.5 V1.5 H80" fill="none" stroke="#444" stroke-width="1.1"/>
<path d="M73 11 L81 2.5 L83 4.5 L75 12.5 L72.5 13 Z" fill="#fff" stroke="#3a8fd6" stroke-width="1"/>
<rect x="68" y="13" width="16" height="4" fill="#3f6bbf"/>
<path d="M86 8 L87.5 9.5 L89 8" fill="none" stroke="#555" stroke-width="1"/>
</svg>
<div class="a" style="left:385.5px;top:124.5px;font-size:7px;color:#333;line-height:8px">Formatvorlage</div>
<div class="a" style="left:435px;top:124.5px;font-size:7px;color:#333;line-height:8px">Füllung</div>
<div class="a" style="left:464px;top:124.5px;font-size:7px;color:#333;line-height:8px">Kontur</div>
<div class="a" style="left:492px;top:110px;width:18px;height:19px;background:#fff;border:1px solid #b9c6d3"></div>
<svg class="a" style="left:494px;top:113px" width="14" height="13" viewBox="0 0 14 13">
<path d="M0.5 1 H13.5 M0.5 4.5 H3 M11 4.5 H13.5 M0.5 8 H2.5 M11.5 8 H13.5 M0.5 11.5 H13.5" stroke="#62a3d8" stroke-width="0.9"/>
<path d="M3.5 9 A3.5 3.5 0 0 1 10.5 9" fill="none" stroke="#222" stroke-width="1.8"/>
</svg>

<!-- context menu -->
<div class="a" style="left:380px;top:151px;width:134px;height:325px;background:#fff;border:1px solid #d4d4d4;box-shadow:1px 1px 3px rgba(0,0,0,0.12)"></div>
<div class="a" style="left:381px;top:275px;width:131px;height:19px;background:#d3d2d1"></div>
<div class="ms" style="top:234px"></div>
<div class="ms" style="top:333px"></div>
<div class="ms" style="top:354px"></div>
<div class="ms" style="top:375px"></div>
<div class="ms" style="top:416px"></div>
<div class="a" style="left:497px;top:299px;width:1px;height:13px;background:#e4e4e4"></div>
<div class="a" style="left:497px;top:318px;width:1px;height:13px;background:#e4e4e4"></div>
<div class="a" style="left:497px;top:339px;width:1px;height:13px;background:#e4e4e4"></div>

<div class="mi" style="top:158.3px">Auss<u>c</u>hneiden</div>
<div class="mi" style="top:177.8px">K<u>o</u>pieren</div>
<div class="mi" style="top:197.8px;font-weight:bold;color:#222">Einfügeoptionen:</div>
<div class="mi" style="top:240.8px">In Form <u>k</u>onvertieren</div>
<div class="mi" style="top:259.8px"><u>G</u>rafik ändern</div>
<div class="mi" style="top:280.8px">Grupp<u>i</u>eren</div>
<div class="mi dis" style="top:299.8px">In d<u>e</u>n Vordergrund</div>
<div class="mi dis" style="top:318.8px">In den Hinter<u>g</u>rund</div>
<div class="mi" style="top:340.8px">Lin<u>k</u></div>
<div class="mi" style="top:361.8px">Als <u>G</u>rafik speichern...</div>
<div class="mi" style="top:382.8px">Beschriftung einfügen...</div>
<div class="mi" style="top:401.8px">Textu<u>m</u>bruch</div>
<div class="mi" style="top:423.3px">Alternativte<u>x</u>t bearbeiten...</div>
<div class="mi" style="top:442.3px">Größe und Po<u>s</u>ition...</div>
<div class="mi" style="top:461.3px">Grafik formatieren</div>

<svg class="a" style="left:500px;top:255px" width="10" height="100" viewBox="0 0 10 100">
<path d="M3.5 5 L6.5 8 L3.5 11" fill="none" stroke="#444" stroke-width="1"/>
<path d="M3.5 26.5 L6.5 29.5 L3.5 32.5" fill="none" stroke="#444" stroke-width="1"/>
<path d="M3.5 45.5 L6.5 48.5 L3.5 51.5" fill="none" stroke="#bdbdbd" stroke-width="1"/>
<path d="M3.5 64.5 L6.5 67.5 L3.5 70.5" fill="none" stroke="#bdbdbd" stroke-width="1"/>
<path d="M3.5 86 L6.5 89 L3.5 92" fill="none" stroke="#444" stroke-width="1"/>
</svg>
<svg class="a" style="left:500px;top:400px" width="10" height="12" viewBox="0 0 10 12">
<path d="M3.5 2 L6.5 5 L3.5 8" fill="none" stroke="#444" stroke-width="1"/>
</svg>

<!-- menu icons -->
<svg class="a" style="left:386px;top:155px" width="18" height="320" viewBox="0 0 18 320">
<!-- scissors -->
<path d="M6.5 2.5 L10.5 9 M11 2.5 L7 9" stroke="#555" stroke-width="0.9"/>
<circle cx="6.8" cy="10.3" r="1.4" fill="none" stroke="#3a8fd6" stroke-width="0.9"/>
<circle cx="10.7" cy="10.3" r="1.4" fill="none" stroke="#3a8fd6" stroke-width="0.9"/>
<!-- copy -->
<path d="M8 29.5 H3.5 V20.5 H8.5 L9.5 22" fill="none" stroke="#444" stroke-width="0.9"/>
<path d="M8.5 23.5 H12 L14 25.5 V31 H8.5 Z" fill="#fff" stroke="#444" stroke-width="0.9"/>
<path d="M10 28.5 H12.5" stroke="#444" stroke-width="0.7"/>
<!-- paste -->
<rect x="3.5" y="41.5" width="8" height="9" fill="#fdf1e2" stroke="#e8a04a" stroke-width="0.9"/>
<path d="M5.5 42 V40 H9.5 V42" fill="#fff" stroke="#777" stroke-width="0.9"/>
<rect x="8.5" y="44.5" width="5" height="6.5" fill="#fff" stroke="#444" stroke-width="0.9"/>
<!-- in form konvertieren -->
<ellipse cx="5" cy="89.7" rx="1.9" ry="4" fill="#5aa55a"/>
<path d="M5 86 V94" stroke="#3d8a3d" stroke-width="0.6"/>
<ellipse cx="9.7" cy="91" rx="1.3" ry="2.1" fill="none" stroke="#5aa55a" stroke-width="0.9"/>
<path d="M14 88.8 C12 89.5 12 92.5 14 93.2 Z" fill="#5aa55a"/>
<path d="M7.5 86.5 C8 83.5 12 83 13 86.5" fill="none" stroke="#3a8fd6" stroke-width="1"/>
<path d="M11.3 85.5 L13 87.5 L14.5 85.5" fill="none" stroke="#3a8fd6" stroke-width="1"/>
<!-- grafik aendern -->
<rect x="3.5" y="104.5" width="10" height="7" fill="none" stroke="#555" stroke-width="1"/>
<path d="M5 106 L12.5 111" fill="none" stroke="#555" stroke-width="0.9" stroke-dasharray="1.3 1"/>
<path d="M9.5 107 L12 106" fill="none" stroke="#555" stroke-width="0.9"/>
<path d="M4 113.5 L7.5 110 M5 110 H7.5 V112.5" fill="none" stroke="#3a8fd6" stroke-width="1"/>
<!-- gruppieren -->
<path d="M3.5 124.5 V126 M3.5 128 V131 M3.5 133 V135 M14 124.5 V126 M14 128 V131 M14 133 V135 M5 135 H7 M9 135 H12 M5 124.5 H6.5" fill="none" stroke="#444" stroke-width="1"/>
<rect x="5" y="125.5" width="6.5" height="6" fill="none" stroke="#444" stroke-width="1"/>
<rect x="7.5" y="128" width="5.5" height="5.5" fill="none" stroke="#444" stroke-width="1"/>
<!-- vordergrund disabled -->
<rect x="4" y="144" width="7" height="7" fill="#e0e0e0" stroke="#c0c0c0" stroke-width="1"/>
<path d="M11 147 H13 V153 H7 V151" fill="none" stroke="#c0c0c0" stroke-width="1"/>
<!-- hintergrund -->
<rect x="3.5" y="162.5" width="5" height="5" fill="none" stroke="#c0c0c0" stroke-width="1"/>
<rect x="8.5" y="167.5" width="5" height="5" fill="none" stroke="#c0c0c0" stroke-width="1"/>
<path d="M5.5 169 V171 H7.5 M12 165 V163" fill="none" stroke="#c0c0c0" stroke-width="1"/>
<!-- link -->
<path d="M7.5 186.5 H5.5 C3 186.5 3 191 5.5 191 H9 C11.5 191 11.5 186.5 9 186.5" fill="none" stroke="#444" stroke-width="1"/>
<path d="M9 189 C6.5 189 6.5 193 9 193 H12.5 C15 193 15 188.5 12.5 188.5 H11" fill="none" stroke="#444" stroke-width="1"/>
<!-- beschriftung -->
<rect x="3.5" y="226.5" width="11" height="8" fill="#d6e8f7" stroke="#3b4a6b" stroke-width="1"/>
<path d="M4 234 L7 229.5 L10 233 L12 231 L14 234 Z" fill="#5a9ad6"/>
<path d="M3.5 236.5 H7.5 M9.5 236.5 H14.5" stroke="#e05050" stroke-width="0.9"/>
<!-- textumbruch -->
<path d="M3 245.5 H15 M3 254 H15" stroke="#9cc8e8" stroke-width="1.2"/>
<path d="M3 248.5 H5.5 M12.5 248.5 H15 M3 251.5 H5 M13 251.5 H15" stroke="#555" stroke-width="0.8"/>
<path d="M6.2 252 A2.8 3 0 0 1 11.8 252" fill="none" stroke="#222" stroke-width="1.6"/>
<!-- alt text -->
<rect x="3.5" y="267.5" width="10" height="8" fill="none" stroke="#444" stroke-width="1"/>
<path d="M4 274 L7 271 L10 273.5" fill="none" stroke="#444" stroke-width="0.9"/>
<rect x="9" y="272.5" width="6.5" height="4" fill="#dcebf8" stroke="#3a8fd6" stroke-width="0.9"/>
<!-- groesse -->
<path d="M3 284.5 H15 M3 295.5 H15" stroke="#444" stroke-width="1"/>
<rect x="7.5" y="286.5" width="7" height="7" fill="#cfe6f3" stroke="#444" stroke-width="0.9"/>
<path d="M3 287.5 H6 M3 290 H6 M3 292.5 H6" stroke="#555" stroke-width="0.8"/>
<!-- grafik formatieren -->
<path d="M3.5 307 L6.5 303.5 L10.5 307.5 L7.5 311 Z" fill="#fff" stroke="#444" stroke-width="1"/>
<path d="M6 303.5 C7 302.5 8.5 303 8.5 304.5" fill="none" stroke="#444" stroke-width="0.8"/>
<path d="M7 314 L12.5 308 L14 309.5 L8.5 315 Z" fill="#3a8fd6"/>
</svg>

<svg class="a" style="left:405px;top:212px" width="18" height="19" viewBox="0 0 18 19">
<rect x="2.5" y="4.5" width="10" height="12" fill="#fdf1e2" stroke="#e8a04a" stroke-width="1"/>
<path d="M5 5 V3 H7 C7 1.5 9 1.5 9 3 H11 V5" fill="#fff" stroke="#888" stroke-width="0.9"/>
<rect x="9.5" y="8.5" width="6" height="8.5" fill="#fff" stroke="#555" stroke-width="1"/>
</svg>
<!-- submenu -->
<div class="a" style="left:513px;top:275.5px;width:121px;height:41px;background:#fff;border:1px solid #d4d4d4;box-shadow:1px 1px 3px rgba(0,0,0,0.12)"></div>
<div class="a" style="left:514px;top:298px;width:119px;height:18px;background:#d3d2d1"></div>
<div class="mi dis" style="left:538px;top:281.8px">Gruppieren</div>
<div class="mi" style="left:538px;top:303.3px">Gruppierung aufhe<u>b</u>en</div>
<svg class="a" style="left:519px;top:279px" width="16" height="36" viewBox="0 0 16 36">
<path d="M2.5 1.5 V3 M2.5 5 V7.5 M2.5 9.5 V12 M13 1.5 V3 M13 5 V7.5 M13 9.5 V12 M4 12 H6 M8 12 H11" fill="none" stroke="#b8b8b8" stroke-width="1"/>
<rect x="3.5" y="3" width="6.5" height="5.5" fill="none" stroke="#b8b8b8" stroke-width="1"/>
<rect x="6.5" y="5.5" width="6" height="5.5" fill="none" stroke="#b8b8b8" stroke-width="1"/>
<path d="M3.5 23 H9.5 V26 M3.5 23 V29 H6" fill="none" stroke="#333" stroke-width="1" stroke-dasharray="1.4 1.1"/>
<rect x="6.5" y="26.5" width="6.5" height="6.5" fill="#fff" stroke="#333" stroke-width="1" stroke-dasharray="1.6 0.9"/>
</svg>

</body></html>
